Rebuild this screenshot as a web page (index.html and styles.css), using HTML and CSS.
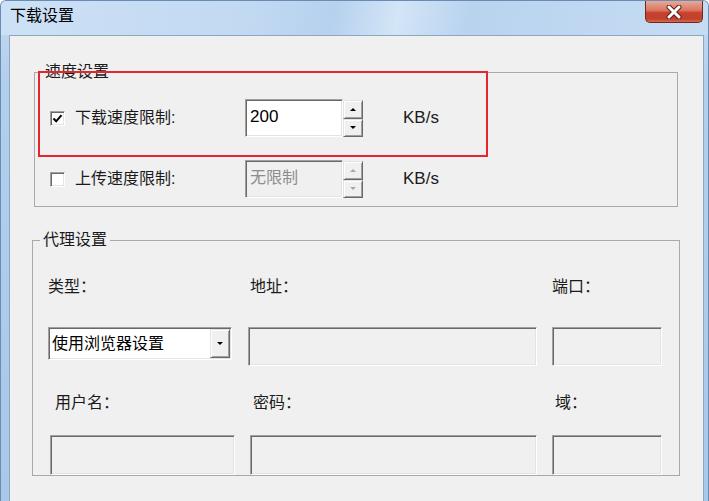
FILE: index.html
```html
<!DOCTYPE html>
<html>

	<head>
		<meta charset="UTF-8">
		<title>下载设置</title>
		<link rel="stylesheet" href="styles.css">
	</head>

	<body>
		<div class="window">
			<div class="titlebar">
				<span class="title">下载设置</span>
				<div class="close">
					<svg width="16" height="14" viewBox="0 0 16 14">
						<path d="M3 2L13 12M13 2L3 12" stroke="#5a2018" stroke-width="5" stroke-linecap="round" />
						<path d="M3 2L13 12M13 2L3 12" stroke="#fff" stroke-width="3" stroke-linecap="round" />
					</svg>
				</div>
			</div>

			<div class="client">
				<!-- 速度设置 -->
				<fieldset class="group group-speed">
					<legend>速度设置</legend>
					<div class="speed-body">
						<div class="limit-row">
							<span class="check">
								<svg width="11" height="11" viewBox="0 0 11 11">
									<path d="M1.5 5.5L4.2 8.3L9.5 2.2" fill="none" stroke="#000" stroke-width="2" />
								</svg>
							</span>
							<span class="limit-label">下载速度限制:</span>
							<div class="spin">
								<span class="spin-text">200</span>
								<span class="spin-btns">
									<span class="spin-btn up"></span>
									<span class="spin-btn down"></span>
								</span>
							</div>
							<span class="unit">KB/s</span>
						</div>
						<div class="limit-row">
							<span class="check"></span>
							<span class="limit-label">上传速度限制:</span>
							<div class="spin disabled">
								<span class="spin-text">无限制</span>
								<span class="spin-btns">
									<span class="spin-btn up"></span>
									<span class="spin-btn down"></span>
								</span>
							</div>
							<span class="unit">KB/s</span>
						</div>
					</div>
				</fieldset>

				<!-- 代理设置 -->
				<fieldset class="group group-proxy">
					<legend>代理设置</legend>
					<div class="proxy-body">
						<span class="plabel row1">类型：</span>
						<span class="plabel row1 c2">地址：</span>
						<span class="plabel row1">端口：</span>

						<div class="combo row2">
							<span class="combo-text">使用浏览器设置</span>
							<span class="combo-btn"></span>
						</div>
						<span class="field row2 f-addr"></span>
						<span class="field row2 f-port"></span>

						<span class="plabel row3 u1">用户名：</span>
						<span class="plabel row3 u2">密码：</span>
						<span class="plabel row3 u3">域：</span>

						<span class="field row4 f-user"></span>
						<span class="field row4 f-pass"></span>
						<span class="field row4 f-port"></span>
					</div>
				</fieldset>

				<div class="highlight"></div>
			</div>
		</div>
	</body>

</html>
```

FILE: styles.css
```css
* {
	margin: 0;
	padding: 0;
	box-sizing: border-box;
}

html,
body {
	width: 709px;
	height: 501px;
	overflow: hidden;
}

body {
	font: 16px/20px "Liberation Sans", "Noto Sans CJK SC", sans-serif;
	color: #1b1b1b;
	background-color: #fff;
}

.window {
	width: 709px;
	height: 520px;
	display: flex;
	flex-direction: column;
	border: 1px solid #6a8cb3;
	border-bottom: 0;
	border-radius: 6px 6px 0 0;
	background: linear-gradient(180deg, #c4dbf2, #b2cfed 80px, #a8c8ea);
}

.titlebar {
	height: 34px;
	display: flex;
	justify-content: space-between;
	align-items: flex-start;
	padding-left: 9px;
	border-radius: 5px 5px 0 0;
	background: linear-gradient(100deg, #cde1f6 0%, #c2d9f2 35%, #b6d1ee 47%, #d3e5f7 56%, #b9d3ef 66%, #c6dcf3 100%);
}

.title {
	margin-top: 5px;
	color: #000;
}

.close {
	width: 58px;
	height: 22px;
	margin-right: 5px;
	display: flex;
	align-items: center;
	justify-content: center;
	border: 1px solid #6e2a22;
	border-top: 0;
	border-radius: 0 0 5px 5px;
	background: linear-gradient(180deg, #e7aa9a 0%, #d9765f 45%, #c8432f 55%, #c2402c 85%, #d66a4f 100%);
}

.client {
	flex: 1;
	position: relative;
	margin: 0 4px 0 8px;
	border: 1px solid #8ea6bf;
	border-bottom: 0;
	background-color: #f0f0f0;
}

/* group box */
.group {
	border: 1px solid #a9a9a9;
	min-inline-size: 0;
}

.group legend {
	margin-left: 7px;
	padding: 0 3px;
	line-height: 18px;
}

.group-speed {
	margin: 27px 25px 0 24px;
}

.group-proxy {
	margin: 24px 23px 0 22px;
}

.speed-body {
	display: flex;
	flex-direction: column;
	gap: 23px;
	padding: 18px 0 8px 15px;
}

.limit-row {
	height: 38px;
	display: flex;
	align-items: center;
}

.check {
	width: 15px;
	height: 15px;
	display: flex;
	align-items: center;
	justify-content: center;
	border: 1px solid;
	border-color: #a0a0a0 #fff #fff #a0a0a0;
	box-shadow: inset 1px 1px 0 #696969, inset -1px -1px 0 #e3e3e3;
	background-color: #fff;
}

.limit-label {
	width: 170px;
	margin-left: 10px;
}

.spin {
	width: 118px;
	height: 38px;
	display: flex;
}

.spin-text {
	width: 98px;
	height: 38px;
	padding-left: 4px;
	font-size: 17px;
	line-height: 34px;
	color: #000;
	background-color: #fff;
}

.spin-text,
.field,
.combo {
	border: 1px solid;
	border-color: #a0a0a0 #fff #fff #a0a0a0;
	box-shadow: inset 1px 1px 0 #696969, inset -1px -1px 0 #e3e3e3;
}

.spin-btns {
	width: 20px;
	height: 37px;
	margin-top: 1px;
	display: flex;
	flex-direction: column;
}

.spin-btn,
.combo-btn {
	display: flex;
	align-items: center;
	justify-content: center;
	border: 1px solid;
	border-color: #e3e3e3 #696969 #696969 #e3e3e3;
	box-shadow: inset 1px 1px 0 #fff, inset -1px -1px 0 #a0a0a0;
	background-color: #f0f0f0;
}

.spin-btn {
	flex: 1;
}

.spin-btn::after,
.combo-btn::after {
	content: "";
	border-left: 3px solid transparent;
	border-right: 3px solid transparent;
}

.spin-btn.up::after {
	border-bottom: 3px solid #000;
}

.spin-btn.down::after,
.combo-btn::after {
	border-top: 3px solid #000;
}

.spin.disabled .spin-text {
	color: #8d8d8d;
	font-size: 16px;
	background-color: #f0f0f0;
}

.spin.disabled .spin-btn.up::after {
	border-bottom-color: #a8a8a8;
}

.spin.disabled .spin-btn.down::after {
	border-top-color: #a8a8a8;
}

.unit {
	margin-left: 40px;
	font-size: 17px;
}

/* proxy */
.proxy-body {
	display: grid;
	grid-template-columns: 186px 290px 110px;
	column-gap: 14px;
	padding: 28px 0 0 15px;
	align-items: start;
}

.plabel {
	line-height: 20px;
}

.plabel.c2 {
	margin-left: 2px;
}

.row2 {
	margin-top: 30px;
	height: 39px;
}

.row3 {
	margin-top: 27px;
}

.u1 {
	margin-left: 7px;
}

.u2 {
	margin-left: 5px;
}

.u3 {
	margin-left: 3px;
}

.row4 {
	margin-top: 22px;
	height: 40px;
}

.field {
	display: block;
	background-color: #f0f0f0;
}

.combo {
	width: 184px;
	height: 33px;
	display: flex;
	background-color: #fff;
}

.combo-text {
	flex: 1;
	padding-left: 3px;
	line-height: 31px;
	color: #000;
}

.combo-btn {
	width: 20px;
	margin: 1px 1px 1px 0;
}

.f-addr {
	width: 289px;
}

.f-port {
	width: 110px;
}

.f-user {
	width: 185px;
	margin-left: 2px;
}

.f-pass {
	width: 287px;
	margin-left: 2px;
}

/* 红框标注 */
.highlight {
	position: absolute;
	left: 28px;
	top: 35px;
	width: 450px;
	height: 86px;
	border: 2px solid #e5262c;
}
```
